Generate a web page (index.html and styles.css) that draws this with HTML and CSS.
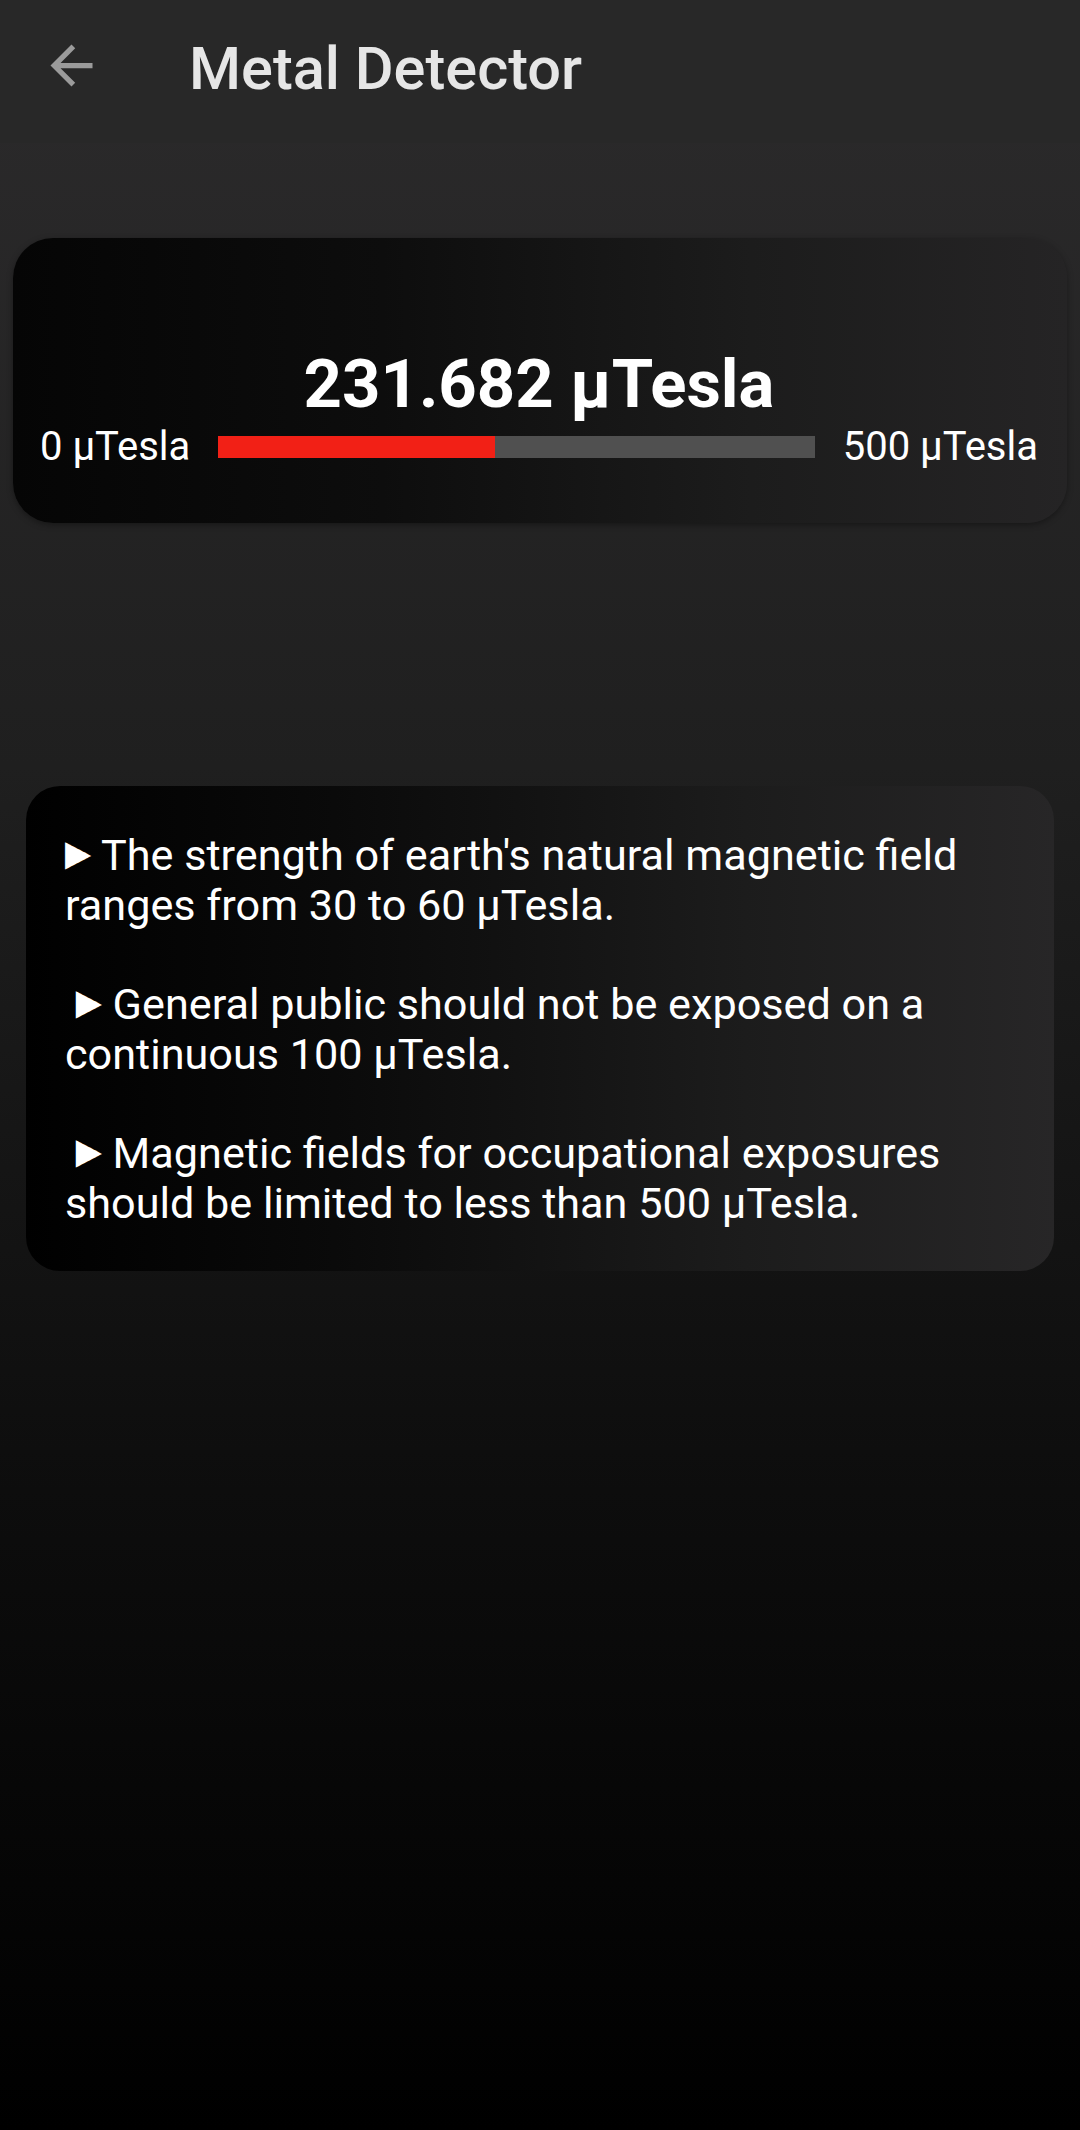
FILE: index.html
```html
<!DOCTYPE html>
<html lang="en">
<head>
<meta charset="utf-8">
<title>Metal Detector</title>
<link rel="stylesheet" href="styles.css">
</head>
<body>
<div class="screen">
  <header class="toolbar">
    <svg class="back" viewBox="0 0 24 24" aria-hidden="true">
      <path d="M20 11H7.83l5.59-5.59L12 4l-8 8 8 8 1.41-1.41L7.83 13H20v-2z"/>
    </svg>
    <h1 class="title">Metal Detector</h1>
  </header>

  <section class="meter">
    <div class="value">231.682 μTesla</div>
    <div class="scale">
      <span class="label">0 μTesla</span>
      <div class="bar"><div class="fill" style="width:46.34%"></div></div>
      <span class="label">500 μTesla</span>
    </div>
  </section>

  <section class="info">
    <p class="info-text"><span class="tri">►</span> The strength of earth's natural magnetic field ranges from 30 to 60 μTesla.

 <span class="tri">►</span> General public should not be exposed on a continuous 100 μTesla.

 <span class="tri">►</span> Magnetic fields for occupational exposures should be limited to less than 500 μTesla.</p>
  </section>
</div>
</body>
</html>
```
FILE: styles.css
```css
html, body {
  margin: 0;
  padding: 0;
}

body {
  width: 1080px;
  height: 2130px;
  overflow: hidden;
  font-family: Roboto, "Noto Sans", "Liberation Sans", sans-serif;
  color: #ffffff;
  background: linear-gradient(180deg, #2c2b2c 0%, #1f1f1f 36%, #0d0d0d 70%, #000000 100%);
}

.screen {
  display: flex;
  flex-direction: column;
  min-height: 2130px;
}

.toolbar {
  display: flex;
  align-items: flex-start;
  height: 143px;
  box-sizing: border-box;
  padding: 34px 0 0 40px;
  background: #282828;
}

.back {
  width: 63px;
  height: 63px;
  fill: #9b9b9b;
  flex: none;
}

.title {
  margin: 0 0 0 86px;
  font-size: 59.5px;
  font-weight: 500;
  line-height: normal;
  color: #e6e6e6;
  letter-spacing: 0;
}

.meter {
  margin: 95px 13px 0;
  padding: 107px 29px 53px 27px;
  border-radius: 40px;
  background: linear-gradient(90deg, #050505 0%, #0d0d0d 35%, #1c1c1c 70%, #252425 100%);
  box-shadow: 0 2px 6px rgba(0, 0, 0, 0.35);
  display: flex;
  flex-direction: column;
  align-items: stretch;
}

.value {
  text-align: center;
  font-size: 67px;
  font-weight: 700;
  line-height: normal;
}

.scale {
  display: flex;
  align-items: center;
  gap: 28px;
}

.label {
  font-size: 40px;
  line-height: normal;
  white-space: nowrap;
}

.bar {
  flex: 1;
  height: 22px;
  background: #505050;
  display: flex;
}

.fill {
  height: 100%;
  background: #f22016;
}

.info {
  margin: 263px 26px 0;
  padding: 45px 34px 42px 39px;
  border-radius: 34px;
  background: linear-gradient(90deg, #000000 0%, #0a0a0a 30%, #1c1c1c 70%, #272627 100%);
}

.info-text {
  margin: 0;
  font-size: 43.2px;
  line-height: 49.7px;
  white-space: pre-wrap;
  color: #ffffff;
}

.tri {
  display: inline-block;
  font-family: "DejaVu Sans", sans-serif;
  font-size: 34px;
  line-height: 0;
  transform: translateY(-7px) scaleY(1.6);
}
```
